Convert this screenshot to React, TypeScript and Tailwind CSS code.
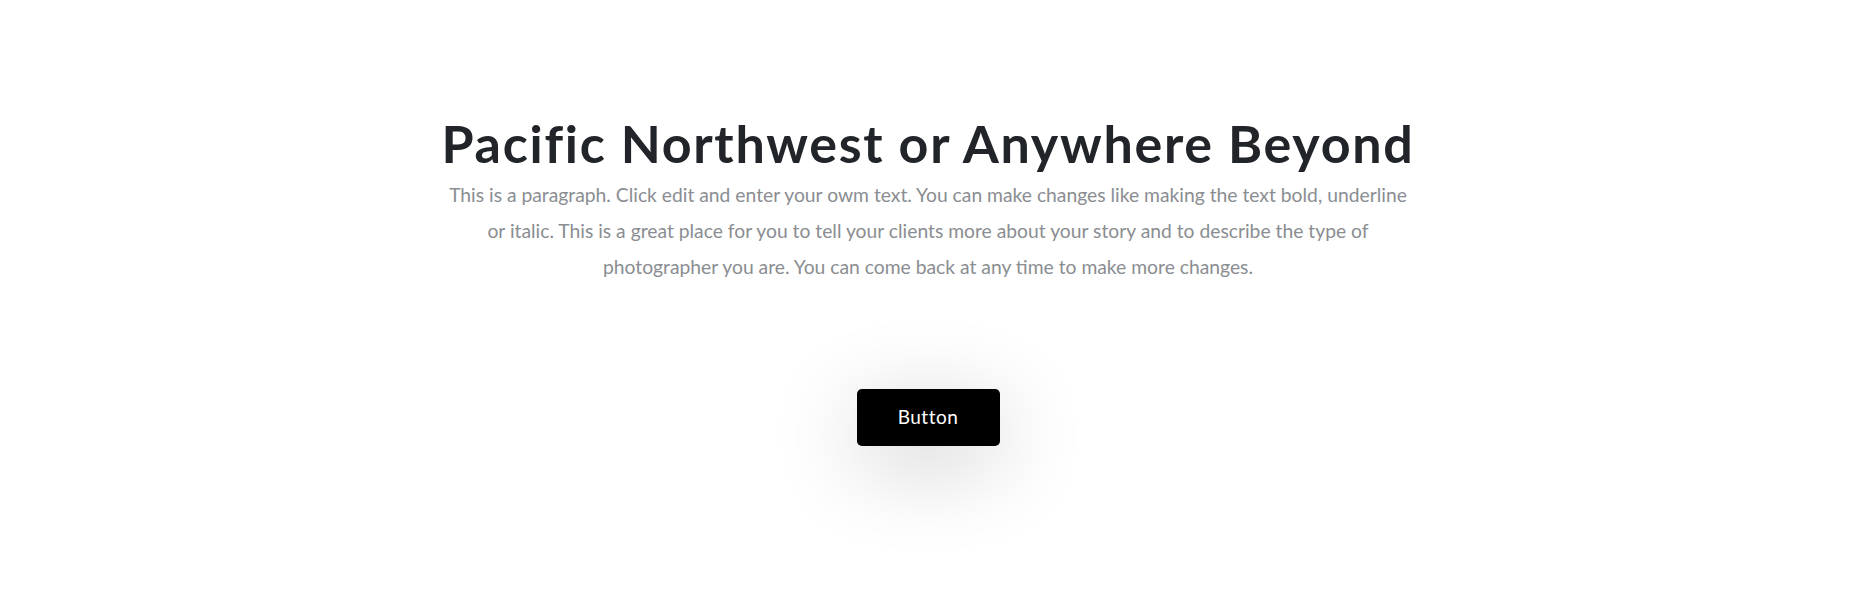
import React from "react";

export default function App() {
  return (
    <div className="w-full min-h-[599px] bg-white flex flex-col items-center pt-[112px]" style={{ fontFamily: "Lato, 'Noto Sans', sans-serif" }}>
      <h1 className="text-[52px] leading-[62px] font-bold text-[#212529] tracking-[1.7px] text-center">
        Pacific Northwest or Anywhere Beyond
      </h1>
      <p className="mt-[3px] w-[972px] text-center text-[19.3px] leading-[36px] text-[#8a8d91]">
        This is a paragraph. Click edit and enter your owm text. You can make changes like making the text bold, underline or italic. This is a great place for you to tell your clients more about your story and to describe the type of photographer you are. You can come back at any time to make more changes.
      </p>
      <button className="mt-[104px] w-[143px] h-[57px] rounded-[5px] bg-black text-white text-[19px] tracking-[0.5px] shadow-[0_18px_90px_rgba(0,0,0,0.2)]">
        Button
      </button>
    </div>
  );
}
